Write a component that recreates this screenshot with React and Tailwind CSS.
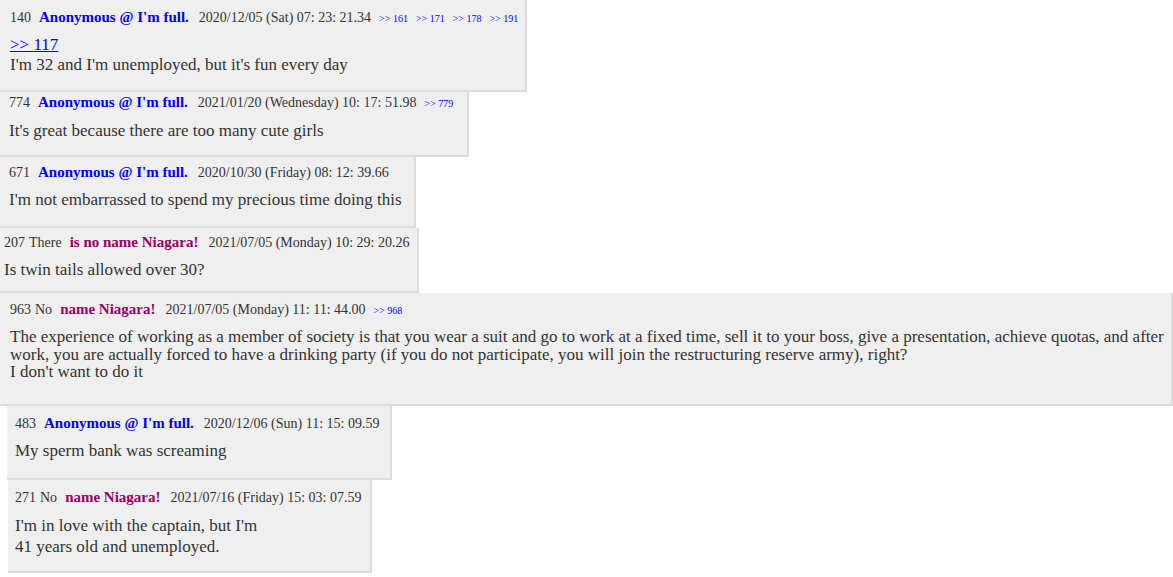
import React from 'react';

const posts = [
  {
    id: 140,
    prefix: '',
    name: "Anonymous @ I'm full.",
    kind: 'anon',
    date: '2020/12/05 (Sat) 07: 23: 21.34',
    replies: ['161', '171', '178', '191'],
    anchor: '117',
    lines: ["I'm 32 and I'm unemployed, but it's fun every day"],
    box: 'w-[527px] h-[92px] pl-[10px] pt-[8px]',
  },
  {
    id: 774,
    prefix: '',
    name: "Anonymous @ I'm full.",
    kind: 'anon',
    date: '2021/01/20 (Wednesday) 10: 17: 51.98',
    replies: ['779'],
    lines: ["It's great because there are too many cute girls"],
    box: 'w-[469px] h-[65px] pl-[9px] pt-[1px]',
  },
  {
    id: 671,
    prefix: '',
    name: "Anonymous @ I'm full.",
    kind: 'anon',
    date: '2020/10/30 (Friday) 08: 12: 39.66',
    replies: [],
    lines: ["I'm not embarrassed to spend my precious time doing this"],
    box: 'w-[416px] h-[71px] pl-[9px] pt-[6px]',
  },
  {
    id: 207,
    prefix: 'There',
    name: 'is no name Niagara!',
    kind: 'niagara',
    date: '2021/07/05 (Monday) 10: 29: 20.26',
    replies: [],
    lines: ['Is twin tails allowed over 30?'],
    box: 'w-[419px] h-[65px] pl-[4px] pt-[5px]',
  },
  {
    id: 963,
    prefix: 'No',
    name: 'name Niagara!',
    kind: 'niagara',
    date: '2021/07/05 (Monday) 11: 11: 44.00',
    replies: ['968'],
    lines: [
      'The experience of working as a member of society is that you wear a suit and go to work at a fixed time, sell it to your boss, give a presentation, achieve quotas, and after work, you are actually forced to have a drinking party (if you do not participate, you will join the restructuring reserve army), right?',
      "I don't want to do it",
    ],
    box: 'w-[1173px] h-[113px] pl-[10px] pr-[6px] pt-[7px]',
    tight: true,
  },
  {
    id: 483,
    prefix: '',
    name: "Anonymous @ I'm full.",
    kind: 'anon',
    date: '2020/12/06 (Sun) 11: 15: 09.59',
    replies: [],
    lines: ['My sperm bank was screaming'],
    box: 'ml-[7px] w-[385px] h-[74px] pl-[8px] pt-[8px]',
  },
  {
    id: 271,
    prefix: 'No',
    name: 'name Niagara!',
    kind: 'niagara',
    date: '2021/07/16 (Friday) 15: 03: 07.59',
    replies: [],
    lines: ["I'm in love with the captain, but I'm", '41 years old and unemployed.'],
    box: 'ml-[8px] w-[364px] h-[93px] pl-[7px] pt-[8px]',
    wide: true,
  },
];

const Post = ({ post }) => (
  <div className={`${post.box} bg-[#efefef] border-r-2 border-b-2 border-[#dcdcdc] text-[#333]`}>
    <div className="flex items-baseline whitespace-nowrap text-[14px] leading-[18px]">
      <span>{post.id}</span>
      {post.prefix && <span className="ml-[4px]">{post.prefix}</span>}
      <span
        className={`ml-[8px] text-[15px] font-bold ${post.kind === 'anon' ? 'text-[#0000ff]' : 'text-[#990066]'}`}
      >
        {post.name}
      </span>
      <span className="ml-[10px]">{post.date}</span>
      {post.replies.map((r) => (
        <span key={r} className="ml-[8px] text-[10px] text-[#0000ff]">
          &gt;&gt; {r}
        </span>
      ))}
    </div>
    <div
      className={`${post.anchor ? 'mt-[7px]' : 'mt-[8px]'} ${
        post.tight ? 'leading-[17.5px] text-[17px]' : post.wide ? 'leading-[21px] text-[17px]' : 'leading-[20px] text-[17px]'
      }`}
    >
      {post.anchor && (
        <div className="text-[#0000ff] underline">&gt;&gt; {post.anchor}</div>
      )}
      {post.lines.map((l, i) => (
        <div key={i}>{l}</div>
      ))}
    </div>
  </div>
);

export default function App() {
  return (
    <div className="w-[1173px] h-[577px] bg-white overflow-hidden font-['Liberation_Serif','Times_New_Roman',serif]">
      {posts.map((p) => (
        <Post key={p.id} post={p} />
      ))}
    </div>
  );
}
